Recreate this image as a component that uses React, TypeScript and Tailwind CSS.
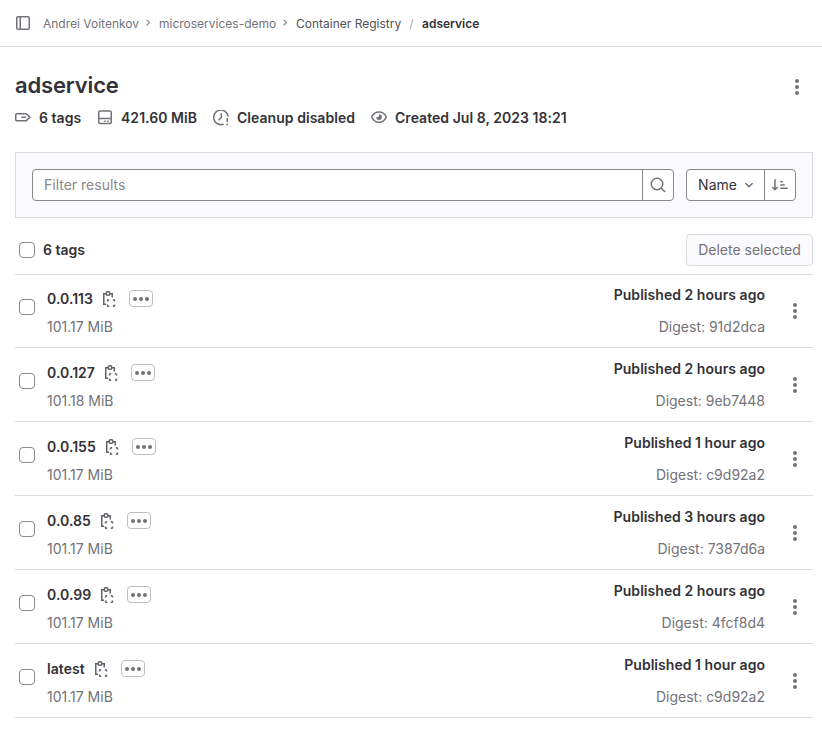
import React from "react";

type IconProps = { className?: string };

const Dots = ({ className = "" }: IconProps) => (
  <svg width="16" height="16" viewBox="0 0 16 16" fill="currentColor" className={"shrink-0 " + className}>
    <circle cx="8" cy="2" r="2" />
    <circle cx="8" cy="8" r="2" />
    <circle cx="8" cy="14" r="2" />
  </svg>
);

const Chevron = () => (
  <svg width="8" height="8" viewBox="0 0 8 8" fill="none" stroke="#89888d" strokeWidth="1.2" strokeLinecap="round" strokeLinejoin="round" className="shrink-0">
    <path d="M3 1.2 5.4 3.6 3 6" />
  </svg>
);

const SidebarIcon = () => (
  <svg width="16" height="16" viewBox="0 0 16 16" fill="none" stroke="#737278" strokeWidth="1.5" className="shrink-0">
    <rect x="1.75" y="1.75" width="12.5" height="12.5" rx="1.25" />
    <path d="M5.25 2v12" />
  </svg>
);

const LabelIcon = () => (
  <svg width="16" height="16" viewBox="0 0 16 16" fill="none" stroke="#737278" strokeWidth="1.5" strokeLinejoin="round" className="shrink-0">
    <path d="M1.75 3.75h9.1a1 1 0 0 1 .75.34L15 7.25l-3.4 3.15a1 1 0 0 1-.75.35h-9.1a1 1 0 0 1-1-1v-5a1 1 0 0 1 1-1Z" />
    <path d="M7 7.25h3.5" strokeLinecap="round" />
  </svg>
);

const DiskIcon = () => (
  <svg width="16" height="16" viewBox="0 0 16 16" fill="none" stroke="#737278" strokeWidth="1.5" className="shrink-0">
    <rect x="1.75" y="1" width="12.5" height="12.5" rx="1.25" />
    <path d="M2 8.5h12" />
    <path d="M7.25 11.25h1.5M10.25 11.25h1.5" />
  </svg>
);

const ExpireIcon = () => (
  <svg width="16" height="16" viewBox="0 0 16 16" fill="none" stroke="#737278" strokeWidth="1.5" strokeLinecap="round" strokeLinejoin="round" className="shrink-0">
    <path d="M10.2 14.25A7.25 7.25 0 1 1 15 5.75" />
    <path d="M8.3 3.75v3.8L6 9.75" />
    <path d="M14.25 8.5v3" />
    <circle cx="14.25" cy="14.5" r="1" fill="#737278" stroke="none" />
  </svg>
);

const EyeIcon = () => (
  <svg width="16" height="16" viewBox="0 0 16 16" fill="none" stroke="#737278" strokeWidth="1.5" className="shrink-0">
    <path d="M8 2c3.500 0 5.800 2 7.050 4.350.2.400.2.900 0 1.300C13.800 10 11.500 12.250 8 12.250S2.200 10 .95 7.650c-.2-.4-.2-.9 0-1.300C2.200 4 4.500 2 8 2Z" />
    <path d="M8 4.250A2.850 2.850 0 1 1 5.150 7.100c.8.4 1.800.300 2.400-.3.500-.6.800-1.600.450-2.550Z" fill="#737278" stroke="none" />
  </svg>
);

const SearchIcon = () => (
  <svg width="16" height="16" viewBox="0 0 16 16" fill="none" stroke="#737278" strokeWidth="1.5" strokeLinecap="round" className="shrink-0">
    <circle cx="7" cy="7" r="5.75" />
    <path d="m11.3 11.3 3.4 3.2" />
  </svg>
);

const ChevronDown = () => (
  <svg width="16" height="16" viewBox="0 0 16 16" fill="none" stroke="#737278" strokeWidth="1.5" strokeLinecap="round" strokeLinejoin="round" className="shrink-0">
    <path d="M4.75 6.5 8 9.75l3.25-3.25" />
  </svg>
);

const SortIcon = () => (
  <svg width="16" height="16" viewBox="0 0 16 16" fill="none" stroke="#737278" strokeWidth="1.5" strokeLinecap="round" strokeLinejoin="round" className="shrink-0">
    <path d="M3 2.75v9.75M.8 10.5 3 12.7l2.2-2.2" />
    <path d="M8.75 4.75h1.5M8.75 8h3.5M8.75 11.25h6.5" />
  </svg>
);

const CopyIcon = () => (
  <svg width="16" height="16" viewBox="0 0 16 16" fill="none" stroke="#626168" strokeWidth="1.5" className="shrink-0">
    <path d="M5 2.75H2.75v10.500H5M9 2.750h2.250V6.500" />
    <rect x="5.25" y=".75" width="3.500" height="3.500" rx="1.25" />
    <path d="M6.500 10.400v-.9a.75.75 0 0 1 .75-.75h.9M11.850 8.750h.9a.75.75 0 0 1 .75.75v.9M13.500 13.600v.9a.75.75 0 0 1-.75.75h-.9M8.150 15.250h-.9a.75.75 0 0 1-.75-.75v-.9" />
  </svg>
);

const Checkbox = () => (
  <span className="block size-4 shrink-0 rounded border border-[#89888d] bg-white" />
);

const tags = [
  { name: "0.0.113", width: "w-[46px]", size: "101.17 MiB", published: "Published 2 hours ago", digest: "91d2dca" },
  { name: "0.0.127", width: "w-[48px]", size: "101.18 MiB", published: "Published 2 hours ago", digest: "9eb7448" },
  { name: "0.0.155", width: "w-[49px]", size: "101.17 MiB", published: "Published 1 hour ago", digest: "c9d92a2" },
  { name: "0.0.85", width: "w-[44px]", size: "101.17 MiB", published: "Published 3 hours ago", digest: "7387d6a" },
  { name: "0.0.99", width: "w-[44px]", size: "101.17 MiB", published: "Published 2 hours ago", digest: "4fcf8d4" },
  { name: "latest", width: "w-[38px]", size: "101.17 MiB", published: "Published 1 hour ago", digest: "c9d92a2" },
];

const TagRow = ({ tag }: { tag: (typeof tags)[number] }) => (
  <li className="flex h-[74px] border-b border-[#dcdcde] pl-1">
    <div className="pt-[25px]">
      <Checkbox />
    </div>
    <div className="ml-3 flex flex-col pt-[15px]">
      <div className="flex h-5">
        <span className={"whitespace-nowrap font-semibold tracking-[0.04px] " + tag.width}>{tag.name}</span>
        <span className="ml-2 pt-0.5">
          <CopyIcon />
        </span>
        <button className="ml-3 mt-px flex h-[17px] w-6 items-center justify-center gap-0.5 rounded border border-[#bfbfc3] bg-white">
          <i className="size-1 rounded-full bg-[#737278]" />
          <i className="size-1 rounded-full bg-[#737278]" />
          <i className="size-1 rounded-full bg-[#737278]" />
        </button>
      </div>
      <span className="mt-2 text-[#737278]">{tag.size}</span>
    </div>
    <div className="ml-auto flex flex-col items-end pt-[11px]">
      <span className="font-semibold tracking-[0.04px]">{tag.published}</span>
      <span className="mt-3 text-[#737278]">Digest: {tag.digest}</span>
    </div>
    <div className="ml-[22px] mr-2.5 pt-[29px]">
      <Dots className="text-[#737278]" />
    </div>
  </li>
);

export default function App() {
  return (
    <div className="h-[733px] w-[822px] overflow-hidden bg-white font-[Inter,'Noto_Sans',sans-serif] text-sm leading-5 text-[#333238]">
      <header className="flex h-[47px] items-center border-b border-[#dcdcde] pl-[15px] text-xs leading-4 text-[#737278]">
        <SidebarIcon />
        <span className="ml-3 w-24 whitespace-nowrap pt-0.5">Andrei Voitenkov</span>
        <span className="ml-[5px] mr-[7px]"><Chevron /></span>
        <span className="w-[117px] whitespace-nowrap pt-0.5">microservices-demo</span>
        <span className="ml-[5px] mr-[7px]"><Chevron /></span>
        <span className="w-[105px] whitespace-nowrap pt-0.5 text-[#535158]">Container Registry</span>
        <span className="w-[21px] pt-0.5 text-center text-[#a4a3a8]">/</span>
        <span className="pt-0.5 font-semibold text-[#333238]">adservice</span>
      </header>

      <main className="pl-[15px] pr-[9px]">
        <div className="flex h-[57px] items-start justify-between pr-2 pt-[26px]">
          <h1 className="text-[22px] font-semibold leading-6 tracking-[-0.15px]">adservice</h1>
          <Dots className="mt-1.5 text-[#737278]" />
        </div>
        <div className="mt-1 flex h-5 items-center whitespace-nowrap font-semibold tracking-[0.04px]">
          <LabelIcon />
          <span className="ml-2 w-[42px]">6 tags</span>
          <span className="ml-4"><DiskIcon /></span>
          <span className="ml-2 w-[76px]">421.60 MiB</span>
          <span className="ml-4"><ExpireIcon /></span>
          <span className="ml-2 w-[118px]">Cleanup disabled</span>
          <span className="ml-4"><EyeIcon /></span>
          <span className="ml-2">Created Jul 8, 2023 18:21</span>
        </div>

        <section className="mt-6 flex h-[66px] items-center border border-[#dcdcde] bg-[#fbfafd] px-4">
          <div className="flex h-8 w-[642px] overflow-hidden rounded border border-[#89888d] bg-white">
            <div className="flex flex-1 items-center pl-[11px] text-[#89888d]">Filter results</div>
            <button className="flex w-[31px] items-center justify-center border-l border-[#89888d]">
              <SearchIcon />
            </button>
          </div>
          <div className="ml-3 flex h-8 w-[110px] rounded border border-[#89888d] bg-white">
            <button className="flex w-[77px] items-center pl-[11px]">
              <span className="w-[39px]">Name</span>
              <span className="ml-1"><ChevronDown /></span>
            </button>
            <button className="flex flex-1 items-center justify-center border-l border-[#89888d]">
              <SortIcon />
            </button>
          </div>
        </section>

        <div className="mt-4 flex h-8 items-center pl-1">
          <Checkbox />
          <span className="ml-2 font-semibold">6 tags</span>
          <button className="ml-auto h-8 w-[127px] whitespace-nowrap rounded border border-[#dcdcde] bg-[#fbfafd] text-[#737278]">
            Delete selected
          </button>
        </div>

        <ul className="mt-2 shadow-[inset_0_1px_0_#dcdcde]">
          {tags.map((tag) => (
            <TagRow key={tag.name} tag={tag} />
          ))}
        </ul>
      </main>
    </div>
  );
}
